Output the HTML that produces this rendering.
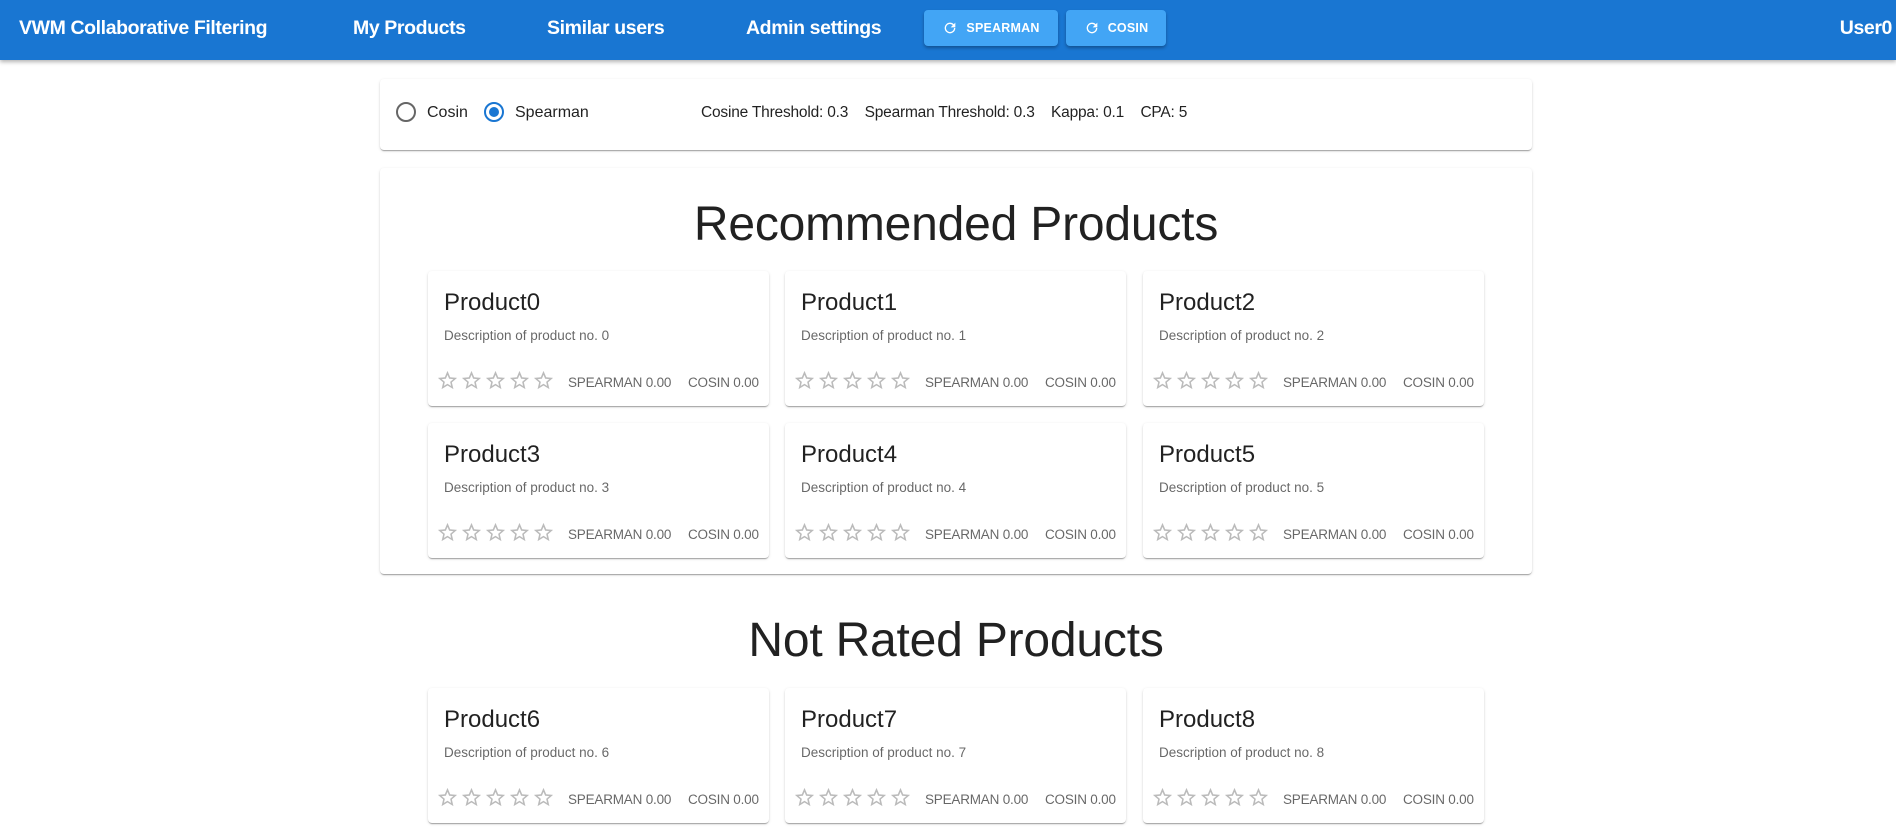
<!DOCTYPE html><html><head><style>
*{box-sizing:border-box;margin:0;padding:0}
body{width:1896px;height:834px;overflow:hidden;background:#fff;font-family:"Liberation Sans",Arial,sans-serif;position:relative;color:rgba(0,0,0,.87)}
.hdr{position:absolute;left:0;top:0;width:1896px;height:60px;background:#1976d2;box-shadow:0 2px 4px rgba(0,0,0,.3);color:#fff}
.hdr .t{position:absolute;top:17px;font-size:19.5px;font-weight:bold;letter-spacing:-0.4px}
.btn{position:absolute;top:10px;height:36px;background:#42a5f5;border-radius:4px;box-shadow:0 2px 3px rgba(0,0,0,.3);color:#fff;font-size:12.5px;font-weight:bold;display:flex;align-items:center;justify-content:center;gap:8px;letter-spacing:.2px}
.card{position:absolute;background:#fff;border-radius:4px;box-shadow:0 2px 1px -1px rgba(0,0,0,.2),0 1px 1px rgba(0,0,0,.14),0 1px 3px rgba(0,0,0,.12)}
.radio{position:absolute;top:102px;width:20px;height:20px;border-radius:50%;border:2px solid #666}
.lbl{position:absolute;top:104px;font-size:16px}
.h{position:absolute;left:380px;width:1152px;text-align:center;font-size:48px;color:rgba(0,0,0,.87);letter-spacing:-0.2px}
.p{width:341px;height:135px}
.p .n{position:absolute;left:16px;top:18px;font-size:24px}
.p .d{position:absolute;left:16px;top:57px;font-size:13.5px;color:rgba(0,0,0,.6)}
.p .s{position:absolute;left:8px;top:98px;display:flex;gap:1px}
.p .m{position:absolute;left:140px;top:104px;font-size:13.5px;color:rgba(0,0,0,.6);letter-spacing:-0.2px}
.p .c{position:absolute;left:260px;top:104px;font-size:13.5px;color:rgba(0,0,0,.6);letter-spacing:-0.2px}
</style></head><body>
<div class="hdr">
<div class="t" style="left:19px">VWM Collaborative Filtering</div>
<div class="t" style="left:353px">My Products</div>
<div class="t" style="left:547px">Similar users</div>
<div class="t" style="left:746px">Admin settings</div>
<div class="btn" style="left:924px;width:134px"><svg width="16" height="16" viewBox="0 0 24 24"><path fill="#fff" d="M17.65 6.35A7.958 7.958 0 0012 4a8 8 0 108 8h-2a6 6 0 11-1.76-4.24L13 11h7V4l-2.35 2.35z"/></svg>SPEARMAN</div>
<div class="btn" style="left:1066px;width:100px"><svg width="16" height="16" viewBox="0 0 24 24"><path fill="#fff" d="M17.65 6.35A7.958 7.958 0 0012 4a8 8 0 108 8h-2a6 6 0 11-1.76-4.24L13 11h7V4l-2.35 2.35z"/></svg>COSIN</div>
<div class="t" style="right:4px">User0</div>
</div>
<div class="card" style="left:380px;top:79px;width:1152px;height:71px"></div>
<div class="radio" style="left:396px"></div><div class="lbl" style="left:427px">Cosin</div>
<div class="radio" style="left:484px;border-color:#1976d2"><div style="position:absolute;left:3px;top:3px;width:10px;height:10px;border-radius:50%;background:#1976d2"></div></div><div class="lbl" style="left:515px">Spearman</div>
<div class="lbl" style="left:701px;font-size:15.5px;letter-spacing:-0.2px">Cosine Threshold: 0.3 &nbsp;&nbsp; Spearman Threshold: 0.3 &nbsp;&nbsp; Kappa: 0.1 &nbsp;&nbsp; CPA: 5</div>
<div class="card" style="left:380px;top:168px;width:1152px;height:406px"></div>
<div class="h" style="top:197px">Recommended Products</div>
<div class="h" style="top:613px">Not Rated Products</div>
<div id="cards"></div>
<script>
var pos=[[428,271],[785,271],[1143,271],[428,423],[785,423],[1143,423],[428,688],[785,688],[1143,688]];
var star='<svg width="23" height="23" viewBox="0 0 24 24"><path fill="#bbb" d="M22 9.24l-7.19-.62L12 2 9.19 8.63 2 9.24l5.46 4.73L5.82 21 12 17.27 18.18 21l-1.63-7.03L22 9.24zM12 15.4l-3.76 2.27 1-4.28-3.32-2.88 4.38-.38L12 6.1l1.71 4.04 4.38.38-3.32 2.88 1 4.28L12 15.4z"/></svg>';
var h='';pos.forEach(function(p,i){h+='<div class="card p" style="left:'+p[0]+'px;top:'+p[1]+'px"><div class="n">Product'+i+'</div><div class="d">Description of product no. '+i+'</div><div class="s">'+star+star+star+star+star+'</div><div class="m">SPEARMAN 0.00</div><div class="c">COSIN 0.00</div></div>'});
document.getElementById('cards').innerHTML=h;
</script>
</body></html>
